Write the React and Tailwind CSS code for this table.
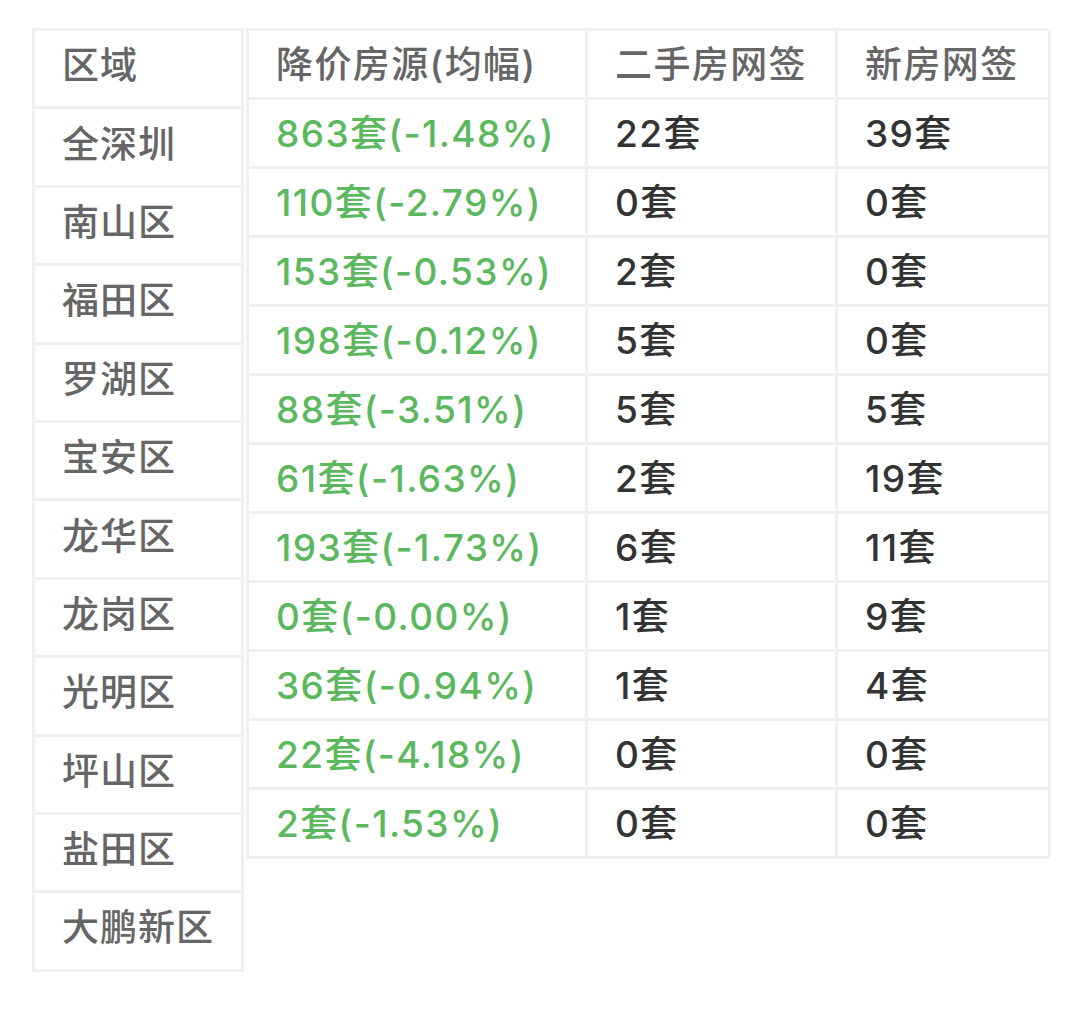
const regions = ["全深圳", "南山区", "福田区", "罗湖区", "宝安区", "龙华区", "龙岗区", "光明区", "坪山区", "盐田区", "大鹏新区"];

const rows = [
  ["863套(-1.48%)", "22套", "39套"],
  ["110套(-2.79%)", "0套", "0套"],
  ["153套(-0.53%)", "2套", "0套"],
  ["198套(-0.12%)", "5套", "0套"],
  ["88套(-3.51%)", "5套", "5套"],
  ["61套(-1.63%)", "2套", "19套"],
  ["193套(-1.73%)", "6套", "11套"],
  ["0套(-0.00%)", "1套", "9套"],
  ["36套(-0.94%)", "1套", "4套"],
  ["22套(-4.18%)", "0套", "0套"],
  ["2套(-1.53%)", "0套", "0套"],
];

const font = { fontFamily: '"Inter", "Noto Sans CJK SC", sans-serif' };

export default function App() {
  return (
    <div className="min-h-[1019px] w-[1080px] bg-white pl-[32px] pt-[28px]" style={font}>
      <div className="flex items-start gap-[2px] text-[37px] font-medium leading-none tracking-[1px]">
        <div className="w-[212px] border-x-[3px] border-t-[3px] border-[#f0f0f0]">
          {["区域", ...regions].map((r) => (
            <div key={r} className="flex h-[78.4px] items-center border-b-[3px] border-[#f0f0f0] px-[27px] pb-[6px] text-[#666666]">
              {r}
            </div>
          ))}
        </div>

        <div className="grid w-[802px] grid-cols-[339px_250px_213px] border-l-[3px] border-t-[3px] border-[#f0f0f0] tracking-[1.4px]">
          {["降价房源(均幅)", "二手房网签", "新房网签"].map((h) => (
            <div key={h} className="flex h-[69px] items-center border-b-[3px] border-r-[3px] border-[#f0f0f0] px-[27px] text-[#666666]">
              {h}
            </div>
          ))}
          {rows.map((row, i) => (
            <div key={i} className="contents">
              <div className="flex h-[69px] items-center border-b-[3px] border-r-[3px] border-[#f0f0f0] px-[27px] text-[#5cb85f]">
                {row[0]}
              </div>
              <div className="flex h-[69px] items-center border-b-[3px] border-r-[3px] border-[#f0f0f0] px-[27px] text-[#333333]">
                {row[1]}
              </div>
              <div className="flex h-[69px] items-center border-b-[3px] border-r-[3px] border-[#f0f0f0] px-[27px] text-[#333333]">
                {row[2]}
              </div>
            </div>
          ))}
        </div>
      </div>
    </div>
  );
}
